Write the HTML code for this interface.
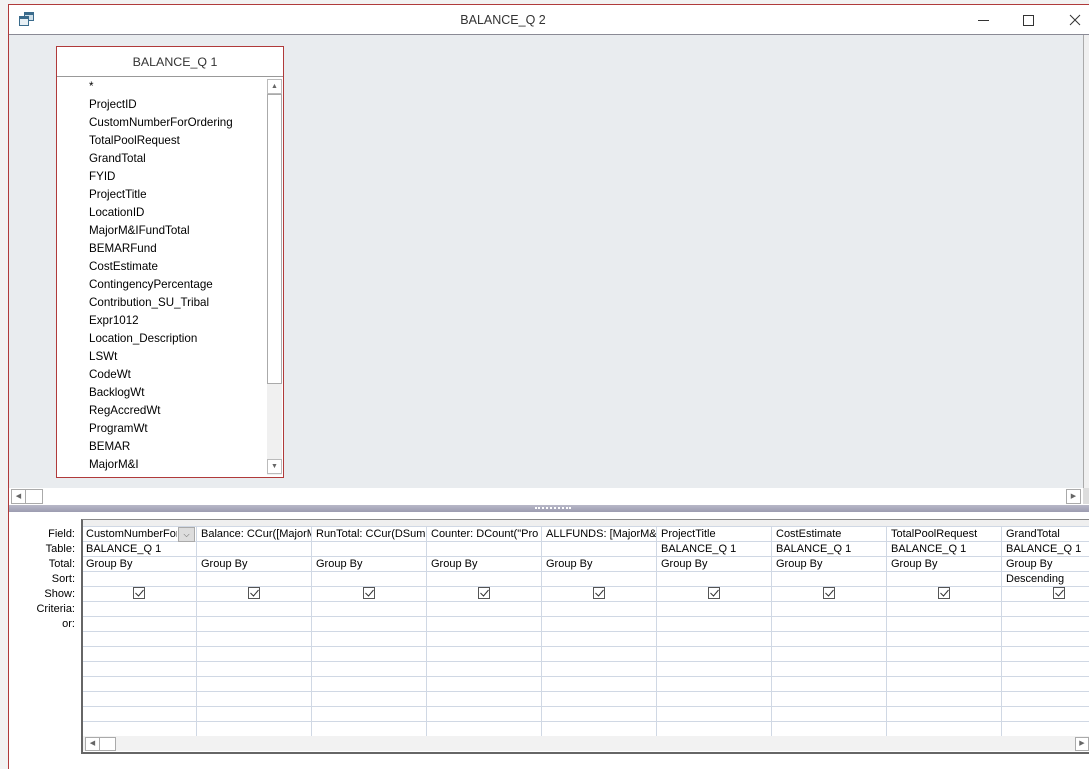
<!DOCTYPE html><html><head><style>
body{margin:0;width:1089px;height:768px;position:relative;overflow:hidden;background:#f2f2f2;font-family:"Segoe UI","Liberation Sans",sans-serif;font-size:11px;color:#000}
.a{position:absolute}
</style></head><body>
<div class="a" style="left:8px;top:4px;width:1081px;height:764px;background:#fff;border-left:1px solid #b03a3a;border-top:1px solid #b03a3a"></div>
<svg class="a" style="left:18px;top:11px" width="18" height="16"><rect x="6" y="1" width="10" height="9" fill="#3a6b8c"/><rect x="7" y="4" width="8" height="5" fill="#cfe0ea"/><rect x="1" y="5" width="10" height="10" fill="#3a6b8c"/><rect x="2" y="8" width="8" height="6" fill="#e8f0f5"/></svg>
<div class="a" style="left:0;width:1006px;top:13px;text-align:center;font-size:12.5px;color:#333">BALANCE_Q 2</div>
<div class="a" style="left:978px;top:20px;width:11px;height:1px;background:#333"></div>
<div class="a" style="left:1023px;top:15px;width:9px;height:9px;border:1px solid #333"></div>
<svg class="a" style="left:1069px;top:14px" width="12" height="12"><path d="M1 1L11 11M11 1L1 11" stroke="#333" stroke-width="1"/></svg>
<div class="a" style="left:9px;top:34px;width:1080px;height:1px;background:#8a8a95"></div>
<div class="a" style="left:9px;top:35px;width:1074px;height:453px;background:#e9ecef"></div>
<div class="a" style="left:1083px;top:35px;width:6px;height:453px;background:#f0f0f0;border-left:1px solid #aaa"></div>
<div class="a" style="left:56px;top:46px;width:226px;height:430px;background:#fff;border:1px solid #b03a3a"></div>
<div class="a" style="left:57px;top:55px;width:236px;text-align:center;font-size:12.4px;color:#333">BALANCE_Q 1</div>
<div class="a" style="left:57px;top:76px;width:226px;height:1px;background:#999"></div>
<div class="a" style="left:267px;top:79px;width:15px;height:396px;background:#f0f0f0"></div>
<div class="a" style="left:267px;top:79px;width:13px;height:13px;border:1px solid #bbb;background:#fff;font-size:7px;text-align:center;line-height:13px;color:#666">▲</div>
<div class="a" style="left:267px;top:94px;width:13px;height:288px;border:1px solid #aaa;background:#fff"></div>
<div class="a" style="left:267px;top:459px;width:13px;height:13px;border:1px solid #bbb;background:#fff;font-size:7px;text-align:center;line-height:13px;color:#666">▼</div>
<div class="a" style="left:89px;top:78px;line-height:18px;font-size:11.6px">*<br>ProjectID<br>CustomNumberForOrdering<br>TotalPoolRequest<br>GrandTotal<br>FYID<br>ProjectTitle<br>LocationID<br>MajorM&amp;IFundTotal<br>BEMARFund<br>CostEstimate<br>ContingencyPercentage<br>Contribution_SU_Tribal<br>Expr1012<br>Location_Description<br>LSWt<br>CodeWt<br>BacklogWt<br>RegAccredWt<br>ProgramWt<br>BEMAR<br>MajorM&amp;I</div>
<div class="a" style="left:9px;top:488px;width:1074px;height:16px;background:#fff"></div>
<div class="a" style="left:11px;top:489px;width:13px;height:13px;border:1px solid #aaa;background:#fff;font-size:7px;line-height:13px;text-align:center;color:#666">◀</div>
<div class="a" style="left:25px;top:489px;width:16px;height:13px;border:1px solid #aaa"></div>
<div class="a" style="left:1066px;top:489px;width:13px;height:13px;border:1px solid #aaa;background:#fff;font-size:7px;line-height:13px;text-align:center;color:#666">▶</div>
<div class="a" style="left:1083px;top:488px;width:6px;height:16px;background:#ddd"></div>
<div class="a" style="left:9px;top:505px;width:1080px;height:7px;background:linear-gradient(#b8b8c8,#9c9cb0)"></div>
<div class="a" style="left:535px;top:507px;width:36px;height:2px;border-top:2px dotted #fff"></div>
<div class="a" style="left:81px;top:519px;width:1008px;height:232px;border-left:2px solid #666;border-top:1px solid #888;border-bottom:2px solid #666"></div>
<div class="a" style="left:83px;top:520px;width:1006px;height:6px;background:#efefef"></div>
<div class="a" style="left:83px;top:736px;width:1006px;height:15px;background:#f2f2f2"></div>
<div class="a" style="left:85px;top:737px;width:13px;height:12px;border:1px solid #aaa;background:#fff;font-size:7px;line-height:12px;text-align:center;color:#666">◀</div>
<div class="a" style="left:99px;top:737px;width:15px;height:12px;border:1px solid #aaa;background:#fff"></div>
<div class="a" style="left:1075px;top:737px;width:12px;height:12px;border:1px solid #aaa;background:#fff;font-size:7px;line-height:12px;text-align:center;color:#666">▶</div>
<svg class="a" style="left:83px;top:526px" width="1006" height="210">
<g stroke="#d0d8e4" stroke-width="1">
<path d="M0 .5H1006M0 15.5H1006M0 30.5H1006M0 45.5H1006M0 60.5H1006M0 75.5H1006M0 90.5H1006M0 105.5H1006M0 120.5H1006M0 135.5H1006M0 150.5H1006M0 165.5H1006M0 180.5H1006M0 195.5H1006"/>
<path d="M113.5 0V210M228.5 0V210M343.5 0V210M458.5 0V210M573.5 0V210M688.5 0V210M803.5 0V210M918.5 0V210"/>
</g>
<path d="M113.5 -6V0M228.5 -6V0M343.5 -6V0M458.5 -6V0M573.5 -6V0M688.5 -6V0M803.5 -6V0M918.5 -6V0" stroke="#999"/>
</svg>
<div class="a" style="left:14px;top:527px;width:61px;text-align:right;line-height:15px">Field:<br>Table:<br>Total:<br>Sort:<br>Show:<br>Criteria:<br>or:</div>
<div class="a" style="left:178px;top:527px;width:15px;height:13px;background:#ddd;border:1px solid #aaa;font-size:8px;text-align:center;line-height:13px;color:#555">⌵</div>
<div class="a" style="top:527px;line-height:15px;white-space:nowrap;left:0">
<div class="a" style="left:86px;width:91px;overflow:hidden">CustomNumberFor<br>BALANCE_Q 1<br>Group By</div>
<div class="a" style="left:201px;width:110px;overflow:hidden">Balance: CCur([MajorM&amp;I]<br><br>Group By</div>
<div class="a" style="left:316px;width:110px;overflow:hidden">RunTotal: CCur(DSum<br><br>Group By</div>
<div class="a" style="left:431px;width:110px;overflow:hidden">Counter: DCount("Pro<br><br>Group By</div>
<div class="a" style="left:546px;width:110px;overflow:hidden">ALLFUNDS: [MajorM&amp;I<br><br>Group By</div>
<div class="a" style="left:661px">ProjectTitle<br>BALANCE_Q 1<br>Group By</div>
<div class="a" style="left:776px">CostEstimate<br>BALANCE_Q 1<br>Group By</div>
<div class="a" style="left:891px">TotalPoolRequest<br>BALANCE_Q 1<br>Group By</div>
<div class="a" style="left:1006px">GrandTotal<br>BALANCE_Q 1<br>Group By<br>Descending</div>
</div>
<svg class="a" style="left:0;top:586px" width="1089" height="14"><g fill="#fff" stroke="#555"><rect x="133.5" y="1.5" width="11" height="11"/><rect x="248.5" y="1.5" width="11" height="11"/><rect x="363.5" y="1.5" width="11" height="11"/><rect x="478.5" y="1.5" width="11" height="11"/><rect x="593.5" y="1.5" width="11" height="11"/><rect x="708.5" y="1.5" width="11" height="11"/><rect x="823.5" y="1.5" width="11" height="11"/><rect x="938.5" y="1.5" width="11" height="11"/><rect x="1053.5" y="1.5" width="11" height="11"/></g><g fill="none" stroke="#333"><path d="M135.5 7l3 3l5-6M250.5 7l3 3l5-6M365.5 7l3 3l5-6M480.5 7l3 3l5-6M595.5 7l3 3l5-6M710.5 7l3 3l5-6M825.5 7l3 3l5-6M940.5 7l3 3l5-6M1055.5 7l3 3l5-6"/></g></svg>
</body></html>
